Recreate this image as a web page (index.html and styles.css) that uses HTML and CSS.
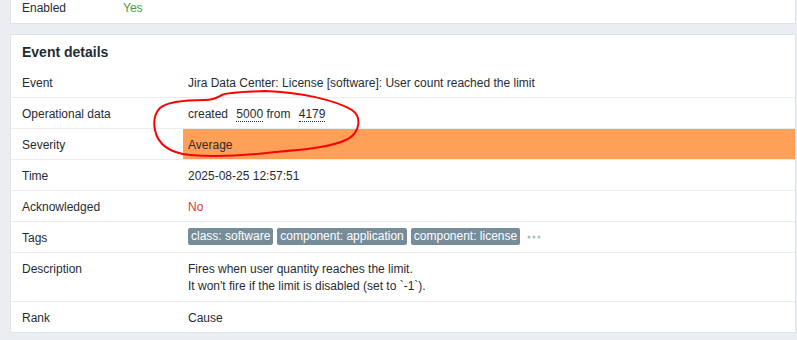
FILE: index.html
```html
<!DOCTYPE html>
<html lang="en">
<head>
    <meta charset="UTF-8">
    <meta name="viewport" content="width=device-width, initial-scale=1.0">
    <title>Event details</title>
    <link rel="stylesheet" href="styles.css">
</head>
<body>
    <div class="page">
        <div class="panel panel-top">
            <div class="row row-short">
                <div class="label">Enabled</div>
                <div class="value green">Yes</div>
            </div>
        </div>

        <div class="panel">
            <h4 class="panel-head">Event details</h4>
            <div class="row">
                <div class="label">Event</div>
                <div class="value">Jira Data Center: License [software]: User count reached the limit</div>
            </div>
            <div class="row">
                <div class="label">Operational data</div>
                <div class="value">created <span class="hint">5000</span> from <span class="hint">4179</span></div>
            </div>
            <div class="row">
                <div class="label">Severity</div>
                <div class="value sev-average">Average</div>
            </div>
            <div class="row">
                <div class="label">Time</div>
                <div class="value">2025-08-25 12:57:51</div>
            </div>
            <div class="row">
                <div class="label">Acknowledged</div>
                <div class="value red">No</div>
            </div>
            <div class="row">
                <div class="label">Tags</div>
                <div class="value tags">
                    <span class="tag">class: software</span>
                    <span class="tag">component: application</span>
                    <span class="tag">component: license</span>
                    <svg class="more" width="16" height="6" viewBox="0 0 16 6">
                        <circle cx="2" cy="3" r="1.5"/>
                        <circle cx="7" cy="3" r="1.5"/>
                        <circle cx="12" cy="3" r="1.5"/>
                    </svg>
                </div>
            </div>
            <div class="row row-tall">
                <div class="label">Description</div>
                <div class="value">Fires when user quantity reaches the limit.<br>It won't fire if the limit is disabled (set to `-1`).</div>
            </div>
            <div class="row row-last">
                <div class="label">Rank</div>
                <div class="value">Cause</div>
            </div>
        </div>
    </div>

    <!-- hand drawn annotation -->
    <svg class="mark" width="797" height="340" viewBox="0 0 797 340">
        <path d="M 160 108
                 C 168 101, 190 100, 205 100
                 C 215 100, 218 97, 222 95
                 C 228 92, 245 92, 265 91
                 C 300 92, 335 100, 352 110
                 C 362 117, 360 132, 348 139
                 C 330 148, 300 150, 275 152
                 C 250 155, 215 157, 190 155
                 C 170 153, 158 145, 155 130
                 C 153 120, 155 113, 160 108"/>
    </svg>
</body>
</html>
```

FILE: styles.css
```css
body {
    margin: 0;
    background-color: #ebeef0;
    font-family: "Liberation Sans", Arial, sans-serif;
    font-size: 12px;
    color: #1f2c33;
    overflow: hidden;
}
.page {
    padding: 0 1px 0 10px;
}
.panel {
    background-color: #fff;
    border: 1px solid #dfe4e7;
    margin-top: 10px;
}
.panel-top {
    margin-top: 0;
    border-top: none;
}
.panel-head {
    margin: 0;
    padding: 8px 11px 6px;
    font-size: 14px;
    line-height: 18px;
    font-weight: bold;
}
.row {
    display: grid;
    grid-template-columns: 172px 1fr;
    line-height: 17px;
    border-bottom: 1px solid #ebeef0;
}
.row-short {
    grid-template-columns: 107px 1fr;
    border-bottom: none;
}
.row-short .label,
.row-short .value {
    padding-top: 0;
    padding-bottom: 6px;
}
.row-tall .label,
.row-tall .value {
    padding-bottom: 6px;
}
.row-last {
    border-bottom: none;
}
.label {
    padding: 8px 5px 5px 11px;
}
.value {
    padding: 8px 5px 5px;
}
.green {
    color: #429e47;
}
.red {
    color: #e33734;
}
.sev-average {
    background-color: #ffa059;
}
.hint {
    margin-left: 5px;
    border-bottom: 1px dotted #1f2c33;
}
.tags {
    display: flex;
    align-items: center;
    gap: 4px;
    padding-top: 6px;
    padding-bottom: 7px;
}
.tag {
    background-color: #768d99;
    color: #fff;
    padding: 1px 3px;
    line-height: 15px;
    border-radius: 2px;
    white-space: nowrap;
}
.more {
    margin-left: 3px;
    fill: #acbbc2;
}
.mark {
    position: absolute;
    left: 0;
    top: 0;
    pointer-events: none;
}
.mark path {
    fill: none;
    stroke: #f00;
    stroke-width: 2;
    stroke-linecap: round;
}
```
